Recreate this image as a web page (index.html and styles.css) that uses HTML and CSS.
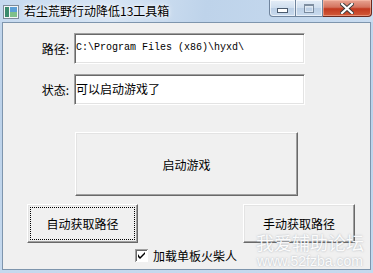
FILE: index.html
```html
<!DOCTYPE html>
<html lang="zh-CN">
<head>
	<meta charset="UTF-8">
	<title>若尘荒野行动降低13工具箱</title>
	<link rel="stylesheet" href="styles.css">
</head>
<body>
	<div id="win">
		<div id="titlebar">
			<svg class="app-icon" width="16" height="14" viewBox="0 0 16 14">
				<rect x="0.5" y="0.5" width="15" height="13" fill="#f4f6f8" stroke="#7d8b99"/>
				<rect x="2" y="2" width="4" height="10" fill="#3b8b6d"/>
				<rect x="7" y="2" width="7" height="10" fill="#5b9fd6"/>
				<rect x="7" y="7" width="7" height="5" fill="#7fc08a"/>
			</svg>
			<span class="title">若尘荒野行动降低13工具箱</span>
			<div class="caption-btns">
				<a class="cap cap-min" href="javascript:;"><i></i></a>
				<a class="cap cap-max" href="javascript:;"><i></i></a>
				<a class="cap cap-close" href="javascript:;">
					<svg width="14" height="11" viewBox="0 0 14 11">
						<path d="M2 1 L12 10 M12 1 L2 10" stroke="#3a3a3a" stroke-width="4" stroke-linecap="square"/>
						<path d="M2 1 L12 10 M12 1 L2 10" stroke="#fff" stroke-width="2.2" stroke-linecap="square"/>
					</svg>
				</a>
			</div>
		</div>
		<div id="client">
			<div class="fields">
				<div class="field">
					<span class="field-label">路径:</span>
					<div class="edit edit-path">C:\Program Files (x86)\hyxd\</div>
				</div>
				<div class="field">
					<span class="field-label">状态:</span>
					<div class="edit">可以启动游戏了</div>
				</div>
			</div>
			<button class="btn btn-start">启动游戏</button>
			<div class="btn-row">
				<button class="btn btn-small btn-focus">自动获取路径</button>
				<button class="btn btn-small">手动获取路径</button>
			</div>
			<label class="check-row">
				<svg class="check" width="13" height="13" viewBox="0 0 13 13">
					<rect x="0" y="0" width="13" height="13" fill="#a0a0a0"/>
					<rect x="1" y="1" width="11" height="11" fill="#696969"/>
					<rect x="1" y="12" width="12" height="1" fill="#fff"/>
					<rect x="12" y="1" width="1" height="12" fill="#fff"/>
					<rect x="2" y="2" width="10" height="10" fill="#fff"/>
					<path d="M3 5 L3 8 L5 10 L10 5 L10 3 L5 8 Z" fill="#000"/>
				</svg>
				<span>加载单板火柴人</span>
			</label>
		</div>
		<div class="watermark">
			<p class="wm-cn">我爱辅助论坛</p>
			<p class="wm-url">www.52fzba.com</p>
		</div>
	</div>
</body>
</html>
```

FILE: styles.css
```css
html, body{
	margin: 0;
	padding: 0;
}
body{
	width: 373px;
	height: 273px;
	overflow: hidden;
	font-family: "Noto Sans CJK SC", "Liberation Sans", sans-serif;
	font-size: 12px;
	color: #000;
}
#win{
	position: relative;
	display: flex;
	flex-direction: column;
	width: 373px;
	height: 273px;
	background: linear-gradient(to bottom, #c3d7ed 0%, #bcd2ea 40%, #c5d9ee 100%);
}

/* 标题栏 */
#titlebar{
	display: flex;
	align-items: flex-start;
	height: 22px;
	background: linear-gradient(100deg, #c5d9ef 0%, #d7e5f4 30%, #bed3ea 55%, #c9dcf0 100%);
}
.app-icon{
	margin: 5px 0 0 3px;
	flex: none;
}
.title{
	margin: 2px 0 0 5px;
	line-height: 18px;
	font-size: 12px;
	color: #000;
	text-shadow: 0 0 6px #fff, 0 0 3px #fff;
}
.caption-btns{
	display: flex;
	margin-left: auto;
	margin-right: 1px;
}
.cap{
	display: flex;
	align-items: center;
	justify-content: center;
	height: 17px;
	box-sizing: border-box;
	border: 1px solid #6f849d;
	border-top: 0;
	background: linear-gradient(to bottom, #e4edf7 0%, #cfdeee 50%, #bccfe5 51%, #c9dbee 100%);
	box-shadow: inset 0 0 0 1px rgba(255,255,255,.6);
}
.cap-min{
	width: 27px;
	border-radius: 0 0 0 4px;
}
.cap-max{
	width: 27px;
	border-left: 0;
}
.cap-close{
	width: 49px;
	border-left: 0;
	border-color: #6a2a20;
	border-radius: 0 0 4px 0;
	background: linear-gradient(to bottom, #e8a493 0%, #d4735e 45%, #c2391f 55%, #d25b3a 100%);
	box-shadow: inset 0 0 0 1px rgba(255,200,180,.5);
}
.cap-min i{
	display: block;
	width: 9px;
	height: 3px;
	margin-top: 5px;
	border: 1px solid #4b5b6e;
	background: #fff;
}
.cap-max i{
	display: block;
	width: 8px;
	height: 6px;
	border: 1px solid #5a6b7f;
	border-top-width: 2px;
	background: transparent;
	box-shadow: inset 0 0 0 1px #e8eef5;
	opacity: .7;
}

/* 客户区 */
#client{
	display: flex;
	flex-direction: column;
	flex: 1;
	margin: 0 2px 3px 2px;
	border: 1px solid #7e95ad;
	background: #f0f0f0;
	padding-top: 10px;
}
.fields{
	display: flex;
	flex-direction: column;
	gap: 10px;
}
.field{
	display: flex;
	align-items: center;
	height: 31px;
}
.field-label{
	width: 71px;
	box-sizing: border-box;
	padding-right: 5px;
	text-align: right;
	font-size: 12px;
	white-space: nowrap;
}
.edit{
	width: 231px;
	height: 31px;
	box-sizing: border-box;
	padding: 0 1px;
	border: 1px solid;
	border-color: #a0a0a0 #ffffff #ffffff #a0a0a0;
	box-shadow: inset 1px 1px 0 #696969, inset -1px -1px 0 #e3e3e3;
	background: #fff;
	line-height: 28px;
	font-size: 12px;
	white-space: nowrap;
	overflow: hidden;
}
.edit-path{
	font-family: "Liberation Mono", "DejaVu Sans Mono", monospace;
	font-size: 10px;
}

/* 按钮 */
.btn{
	display: block;
	box-sizing: border-box;
	padding: 0;
	border: 1px solid;
	border-color: #fff #696969 #696969 #fff;
	box-shadow: inset -1px -1px 0 #a0a0a0, inset 1px 1px 0 #e3e3e3;
	background: #f0f0f0;
	font-family: "Noto Sans CJK SC", "Liberation Sans", sans-serif;
	font-size: 12px;
	color: #000;
	cursor: pointer;
}
.btn-start{
	width: 223px;
	height: 64px;
	margin: 27px 0 0 72px;
}
.btn-row{
	display: flex;
	justify-content: space-between;
	margin-top: 8px;
	padding: 0 15px 0 24px;
}
.btn-small{
	width: 112px;
	height: 39px;
}
.btn-focus{
	width: 111px;
	outline: 1px dotted #000;
	outline-offset: -4px;
}

/* 复选框 */
.check-row{
	display: flex;
	align-items: center;
	gap: 5px;
	height: 13px;
	margin-top: 6px;
	padding-left: 132px;
	font-size: 12px;
}
.check{
	flex: none;
}

/* 水印 */
.watermark{
	position: absolute;
	right: 7px;
	bottom: 3px;
	width: 112px;
	text-align: center;
	color: rgba(255,255,255,.95);
	text-shadow: 0 0 2px rgba(110,120,135,.55);
	pointer-events: none;
}
.watermark p{
	margin: 0;
}
.wm-cn{
	font-size: 18px;
	line-height: 22px;
}
.wm-url{
	font-family: "Liberation Sans", Arial, sans-serif;
	font-size: 14px;
	line-height: 17px;
}
```
